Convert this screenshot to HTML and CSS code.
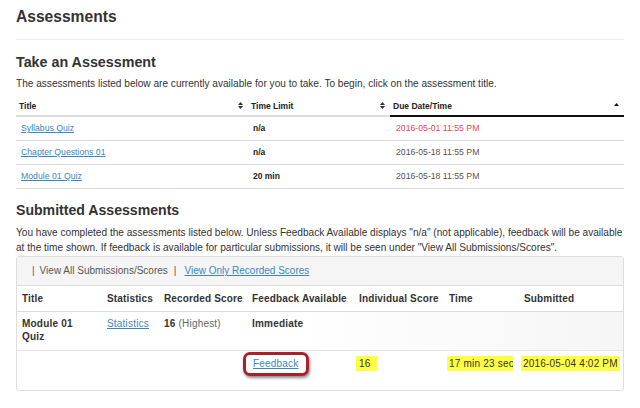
FILE: index.html
```html
<!DOCTYPE html>
<html>
<head>
<meta charset="utf-8">
<link rel="stylesheet" href="styles.css">
</head>
<body>
<div class="page">
  <h1 class="page-title">Assessments</h1>
  <div class="rule"></div>

  <h2 class="section-title">Take an Assessment</h2>
  <p class="intro">The assessments listed below are currently available for you to take. To begin, click on the assessment title.</p>

  <table class="avail">
    <colgroup><col class="c1"><col class="c2"><col class="c3"></colgroup>
    <thead>
      <tr>
        <th><div class="th-in"><span>Title</span><svg class="sort" width="5" height="7" viewBox="0 0 5 7"><path d="M0 3L2.5 0L5 3Z M0 4L2.5 7L5 4Z" fill="#333"/></svg></div></th>
        <th><div class="th-in"><span>Time Limit</span><svg class="sort" width="5" height="7" viewBox="0 0 5 7"><path d="M0 3L2.5 0L5 3Z M0 4L2.5 7L5 4Z" fill="#333"/></svg></div></th>
        <th class="active"><div class="th-in"><span>Due Date/Time</span><svg class="sort" width="5" height="7" viewBox="0 0 5 7"><path d="M0 4L2.5 1L5 4Z" fill="#111"/></svg></div></th>
      </tr>
    </thead>
    <tbody>
      <tr><td><a href="#">Syllabus Quiz</a></td><td class="b">n/a</td><td class="late">2016-05-01 11:55 PM</td></tr>
      <tr><td><a href="#">Chapter Questions 01</a></td><td class="b">n/a</td><td class="date">2016-05-18 11:55 PM</td></tr>
      <tr><td><a href="#">Module 01 Quiz</a></td><td class="b">20 min</td><td class="date">2016-05-18 11:55 PM</td></tr>
    </tbody>
  </table>

  <h2 class="section-title sub">Submitted Assessments</h2>
  <p class="intro two">You have completed the assessments listed below. Unless Feedback Available displays "n/a" (not applicable), feedback will be available at the time shown. If feedback is available for particular submissions, it will be seen under "View All Submissions/Scores".</p>

  <div class="panel">
    <div class="panel-head">
      <span class="pipe">|</span><span class="cur">View All Submissions/Scores</span><span class="pipe">|</span><a href="#">View Only Recorded Scores</a>
    </div>
    <table class="subm">
      <colgroup><col class="s1"><col class="s2"><col class="s3"><col class="s4"><col class="s5"><col class="s6"><col class="s7"></colgroup>
      <thead>
        <tr><th>Title</th><th>Statistics</th><th>Recorded Score</th><th>Feedback Available</th><th>Individual Score</th><th>Time</th><th>Submitted</th></tr>
      </thead>
      <tbody>
        <tr class="main">
          <td class="b">Module 01<br>Quiz</td>
          <td><a href="#">Statistics</a></td>
          <td><b>16</b> <span class="muted">(Highest)</span></td>
          <td class="b">Immediate</td>
          <td></td><td></td><td></td>
        </tr>
        <tr class="detail">
          <td></td><td></td><td></td>
          <td><span class="callout"><a href="#">Feedback</a></span></td>
          <td><span class="hl hl-score">16</span></td>
          <td><div class="clip"><span class="hl">17 min 23 sec</span></div></td>
          <td><span class="hl">2016-05-04 4:02 PM</span></td>
        </tr>
      </tbody>
    </table>
  </div>
</div>
</body>
</html>
```

FILE: styles.css
```css
* { box-sizing: border-box; }
html, body { margin: 0; padding: 0; background: #fff; }
body {
  font-family: "Liberation Sans", Arial, sans-serif;
  font-size: 10.1px;
  color: #333;
}
.page { padding: 7px 16px 0 16px; width: 640px; }

.page-title {
  font-size: 15.6px;
  line-height: 20px;
  font-weight: bold;
  margin: 0;
  color: #333;
}
.rule { height: 1px; background: #eee; margin: 12px 0 13px 0; }

.section-title {
  font-size: 14.3px;
  line-height: 18px;
  font-weight: bold;
  margin: 0;
  color: #333;
}
.section-title.sub { margin-top: 12px; font-size: 14.1px; }

.intro { margin: 5px 0 0 0; line-height: 15px; font-size: 10.1px; }
.intro.two { margin-top: 6px; }

a { color: #3b87c4; text-decoration: underline; }

table { border-collapse: collapse; table-layout: fixed; }

.avail { width: 608px; margin-top: 5px; }
.avail col.c1 { width: 232px; }
.avail col.c2 { width: 142px; }
.avail col.c3 { width: 234px; }
.avail th {
  text-align: left;
  font-weight: bold;
  font-size: 8.5px;
  height: 20px;
  padding: 0 5px 0 3px;
  border-bottom: 2px solid #ddd;
  vertical-align: middle;
  color: #222;
}
.avail th.active { border-bottom: 2px solid #111; }
.th-in { display: flex; align-items: center; justify-content: space-between; }
.sort { display: block; }
.avail td {
  height: 24px;
  padding: 0 5px;
  font-size: 8.7px;
  border-bottom: 1px solid #ddd;
  vertical-align: middle;
}
.avail td.b { font-size: 8.5px; color: #222; }
.avail td.late { color: #ec4450; padding-left: 6px; }
.avail td.date { color: #555; padding-left: 6px; }
.b { font-weight: bold; }

.panel {
  margin-top: 1px;
  border: 1px solid #ddd;
  border-radius: 3px;
  padding-bottom: 14px;
}
.panel-head {
  background: #f5f5f5;
  height: 29px;
  border-bottom: 1px solid #ddd;
  display: flex;
  align-items: center;
  padding-left: 15px;
  font-size: 10px;
  color: #555;
}
.panel-head .pipe { margin-right: 5px; }
.panel-head .cur { margin-right: 6px; }
.panel-head a { margin-left: 3px; }

.subm { width: 606px; font-size: 10px; }
.subm col.s1 { width: 85px; }
.subm col.s2 { width: 57px; }
.subm col.s3 { width: 88px; }
.subm col.s4 { width: 107px; }
.subm col.s5 { width: 90px; }
.subm col.s6 { width: 75px; }
.subm col.s7 { width: 104px; }
.subm th {
  text-align: left;
  height: 26px;
  padding: 0 5px;
  border-bottom: 1px solid #ddd;
  font-weight: bold;
  letter-spacing: 0.15px;
  white-space: nowrap;
  color: #333;
}
.subm td { padding: 0 5px; vertical-align: top; color: #333; letter-spacing: 0.2px; }
.subm tr.main td {
  padding-top: 5px;
  height: 39px;
  line-height: 13px;
  border-bottom: 1px solid #e4e4e4;
}
.subm tr.main { background: linear-gradient(to right, #fff 0%, #fff 45%, #f6f6f6 100%); }
.subm tr.detail td { padding-top: 5px; height: 25px; line-height: 13px; white-space: nowrap; }
.muted { color: #666; }
.hl { background: #ffff44; padding: 1px 2px; margin-left: -3px; display: inline-block; }
.hl.hl-score { padding: 1px 6px 1px 3px; }
.clip { overflow: hidden; width: 66px; margin-left: -2px; }
.clip .hl { margin-left: 0; }
.callout {
  display: inline-block;
  margin-left: -9px;
  margin-top: -4px;
  padding: 2px 7px 3px 7px;
  border: 3px solid #a8222d;
  border-radius: 7px;
  box-shadow: 1px 2px 3px rgba(0,0,0,0.45);
  background: #fff;
}
```
